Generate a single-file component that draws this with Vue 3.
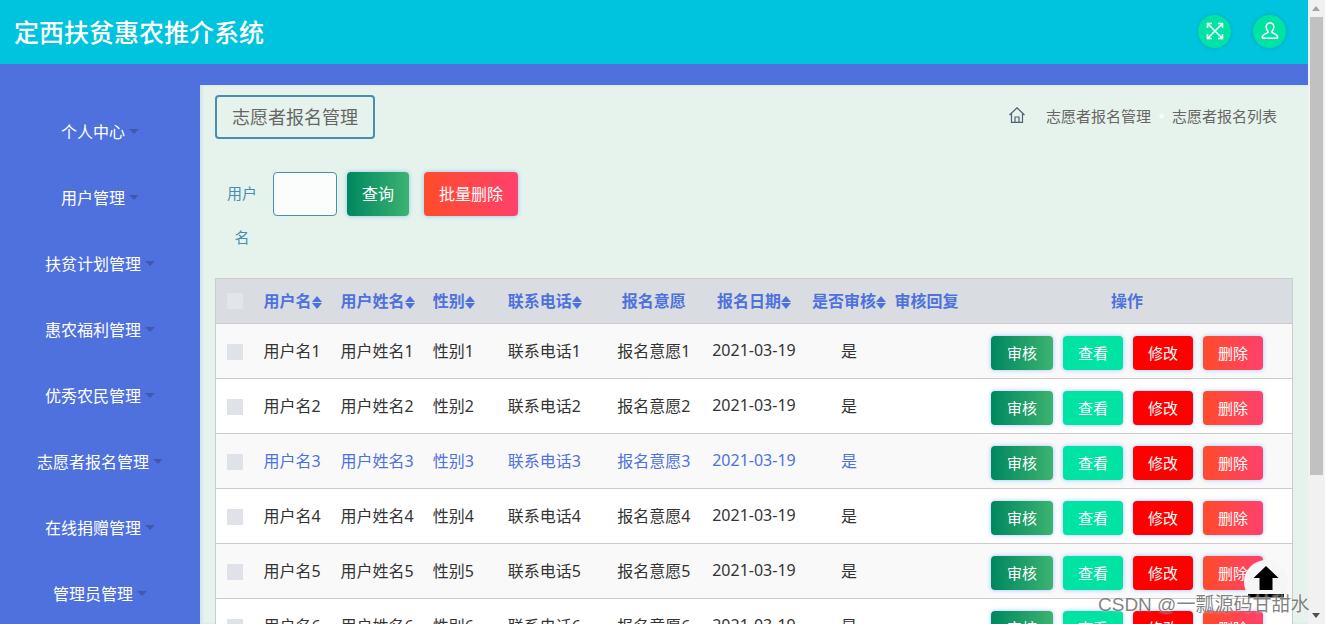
<template>
  <div class="window">
    <div class="page">
      <header class="topbar">
        <h1 class="brand">定西扶贫惠农推介系统</h1>
        <div class="top-actions">
          <button class="round-btn">
            <svg viewBox="0 0 18 18" width="18" height="18" fill="none" stroke="#fff" stroke-width="1.5">
              <path d="M2 2l14 14M16 2L2 16" />
              <path d="M1.5 6V1.5H6M12 1.5h4.5V6M1.5 12v4.5H6M12 16.5h4.5V12" stroke-width="1.6" />
            </svg>
          </button>
          <button class="round-btn">
            <svg viewBox="0 0 20 20" width="20" height="20" fill="none" stroke="#fff" stroke-width="1.5">
              <path d="M10 2c-2.400 0-3.800 1.800-3.800 4 0 2 .8 3.400 1.800 4.300v1.200c-1.800.8-5 1.700-5.700 4.500-.2.800.3 1.300 1 1.300h13.400c.7 0 1.200-.5 1-1.300-.7-2.800-3.900-3.700-5.700-4.500v-1.200c1-.9 1.800-2.300 1.800-4.300 0-2.200-1.400-4-3.800-4z" />
            </svg>
          </button>
        </div>
      </header>

      <div class="body">
        <aside class="sidebar">
          <div v-for="item in menu" :key="item" class="menu-item">
            <span>{{ item }}</span><i class="caret"></i>
          </div>
        </aside>

        <main class="content">
          <div class="title-row">
            <div class="title-box"><span>志愿者报名管理</span></div>
            <div class="crumbs">
              <svg viewBox="0 0 16 16" width="16" height="16" fill="none" stroke="#4f6272" stroke-width="1.200">
                <path d="M.5 8L8 .8 15.500 8M2.500 6.200V15.400h11V6.200M6 15.400V10h4v5.400" />
              </svg>
              <span class="crumb first">志愿者报名管理</span>
              <span class="star">★</span>
              <span class="crumb">志愿者报名列表</span>
            </div>
          </div>

          <div class="search">
            <label class="search-label">用户名</label>
            <input class="search-input" />
            <button class="btn btn-green big">查询</button>
            <button class="btn btn-coral big wide">批量删除</button>
          </div>

          <table class="grid">
            <colgroup>
              <col v-for="w in colWidths" :key="w.key" :style="{ width: w.px + 'px' }" />
            </colgroup>
            <thead>
              <tr>
                <th><span class="check head"></span></th>
                <th v-for="h in heads" :key="h.text" :class="h.cls">
                  {{ h.text }}<span v-if="h.sort" class="sort"><i class="up"></i><i class="down"></i></span>
                </th>
              </tr>
            </thead>
            <tbody>
              <tr v-for="n in 6" :key="n" :class="{ odd: n % 2 === 1, hover: n === 3 }">
                <td><span class="check"></span></td>
                <td>用户名{{ n }}</td>
                <td>用户姓名{{ n }}</td>
                <td>性别{{ n }}</td>
                <td>联系电话{{ n }}</td>
                <td class="center">报名意愿{{ n }}</td>
                <td class="center">2021-03-19</td>
                <td class="center">是</td>
                <td></td>
                <td class="ops">
                  <div class="op-row">
                    <button class="btn btn-green audit">审核</button>
                    <button class="btn btn-mint">查看</button>
                    <button class="btn btn-red">修改</button>
                    <button class="btn btn-coral">删除</button>
                  </div>
                </td>
              </tr>
            </tbody>
          </table>
        </main>
      </div>
    </div>

    <div class="scrollbar">
      <span class="arrow up"></span>
      <span class="thumb"></span>
      <span class="arrow down"></span>
    </div>

    <button class="to-top">
      <svg viewBox="0 0 36 36" width="36" height="36" fill="#000">
        <path d="M18 2L30.500 14H24.500V26H11.500V14H5.500z" />
        <rect y="30" width="36" height="3.500" />
      </svg>
    </button>
    <div class="mark">CSDN @一瓢源码甘甜水</div>
  </div>
</template>

<script setup>
const menu = ['个人中心', '用户管理', '扶贫计划管理', '惠农福利管理', '优秀农民管理', '志愿者报名管理', '在线捐赠管理', '管理员管理']

const colWidths = [
  { key: 'c', px: 36 },
  { key: 'a', px: 77 },
  { key: 'b', px: 92 },
  { key: 'd', px: 75 },
  { key: 'e', px: 111 },
  { key: 'f', px: 94 },
  { key: 'g', px: 106 },
  { key: 'h', px: 84 },
  { key: 'i', px: 71 },
  { key: 'j', px: 330 }
]

const heads = [
  { text: '用户名', sort: true },
  { text: '用户姓名', sort: true },
  { text: '性别', sort: true },
  { text: '联系电话', sort: true },
  { text: '报名意愿', sort: false, cls: 'center' },
  { text: '报名日期', sort: true, cls: 'center' },
  { text: '是否审核', sort: true, cls: 'center' },
  { text: '审核回复', sort: false, cls: 'center' },
  { text: '操作', sort: false, cls: 'center' }
]
</script>

<style>
html,
body {
  margin: 0;
  overflow: hidden;
}
</style>

<style scoped>
.window {
  position: relative;
  display: flex;
  height: 624px;
  overflow: hidden;
  font-family: "Noto Sans", "Noto Sans CJK SC", sans-serif;
}

.page {
  flex: 1;
  min-width: 0;
  display: flex;
  flex-direction: column;
  background: #4f71dd;
}

.topbar {
  flex: none;
  height: 64px;
  background: #00c3dd;
  display: flex;
  align-items: center;
  justify-content: space-between;
  padding: 0 22px 2px 15px;
  box-sizing: border-box;
}

.brand {
  margin: 2px 0 0 -1px;
  color: #fff;
  font-size: 25px;
  font-weight: 500;
  line-height: 32px;
}

.top-actions {
  display: flex;
  gap: 22px;
}

.round-btn {
  width: 33px;
  height: 33px;
  padding: 0;
  border: 0;
  border-radius: 50%;
  background: #00e3a2;
  box-shadow: 0 0 4px rgba(0, 0, 0, 0.15);
  display: flex;
  align-items: center;
  justify-content: center;
}

.body {
  flex: 1;
  display: flex;
  min-height: 0;
}

.sidebar {
  flex: none;
  width: 200px;
  padding-top: 34px;
}

.menu-item {
  height: 66px;
  display: flex;
  align-items: center;
  justify-content: center;
  color: #fff;
  font-size: 16px;
}

.caret {
  width: 0;
  height: 0;
  margin-left: 4px;
  border-top: 5px solid #4258ad;
  border-left: 5px solid transparent;
  border-right: 5px solid transparent;
}

.content {
  flex: 1;
  min-width: 0;
  margin-top: 21px;
  padding: 10px 15px 0;
  background: #e6f3ec;
  box-shadow: inset 2px 0 3px rgba(120, 170, 230, 0.2);
  overflow: hidden;
}

.title-row {
  display: flex;
  align-items: center;
  justify-content: space-between;
}

.title-box {
  width: 160px;
  height: 44px;
  box-sizing: border-box;
  border: 2px solid #4a8eae;
  border-radius: 4px;
  padding-bottom: 3px;
  display: flex;
  align-items: center;
  justify-content: center;
  color: #666;
  font-size: 18px;
}

.crumbs {
  display: flex;
  align-items: center;
  padding: 0 16px 3px 0;
  color: #666;
  font-size: 15px;
  margin-top: -1px;
}

.crumb.first {
  margin-left: 21px;
}

.star {
  margin: 0 7px;
  font-size: 7px;
  color: #fff;
}

.search {
  position: relative;
  display: flex;
  align-items: flex-start;
  margin-top: 33px;
  height: 106px;
}

.search-label {
  width: 54px;
  margin-right: 4px;
  margin-top: -1px;
  box-sizing: border-box;
  padding: 0 12px;
  color: #4a8eae;
  font-size: 15px;
  line-height: 44px;
  text-align: center;
}

.search-input {
  width: 64px;
  height: 44px;
  box-sizing: border-box;
  border: 1px solid #4a8eae;
  border-radius: 4px;
  background: #fbfdfc;
}

.btn {
  border: 0;
  border-radius: 4px;
  color: #fff;
  font-family: inherit;
  font-size: 15px;
  line-height: 32px;
  width: 60px;
  height: 34px;
  padding: 0;
  box-shadow: 0 0 4px rgba(90, 160, 255, 0.6);
}

.btn.big {
  width: 62px;
  height: 44px;
  margin-left: 10px;
  font-size: 16px;
}

.btn.wide {
  width: 94px;
  margin-left: 15px;
}

.btn.audit {
  width: 62px;
}

.btn-green {
  background: linear-gradient(to right, #00875f, #3cb371);
}

.btn-coral {
  background: linear-gradient(to right, #ff4b2b, #ff416c);
}

.btn-mint {
  background: #00e3a2;
}

.btn-red {
  background: #ff0000;
}

.grid {
  width: 1078px;
  table-layout: fixed;
  border-collapse: collapse;
  border: 1px solid #ccc;
  font-size: 16px;
  color: #333;
}

.grid th {
  height: 45px;
  padding: 0 0 2px 12px;
  box-sizing: border-box;
  background: #d9dde2;
  color: #4f71dd;
  font-size: 16px;
  font-weight: 700;
  text-align: left;
  white-space: nowrap;
  border-bottom: 1px solid #ccc;
}

.grid td {
  height: 55px;
  padding: 0 0 2px 12px;
  box-sizing: border-box;
  background: #fff;
  white-space: nowrap;
  border-bottom: 1px solid #ccc;
}

.grid tr.odd td {
  background: #f9f9f9;
}

.grid tr.hover td {
  color: #4f71dd;
}

.grid th.center,
.grid td.center {
  text-align: center;
  padding-left: 0;
}

.check {
  display: block;
  width: 16px;
  height: 16px;
  margin: 4px 0 0 -1px;
  background: #dfe3e9;
}

.check.head {
  background: #e2e5ea;
  margin-top: 2px;
}

.sort {
  display: inline-flex;
  flex-direction: column;
  gap: 1px;
  vertical-align: middle;
}

.sort i {
  width: 0;
  height: 0;
  border-left: 5px solid transparent;
  border-right: 5px solid transparent;
}

.sort .up {
  border-bottom: 6px solid #4f71dd;
}

.sort .down {
  border-top: 6px solid #4f71dd;
}

.grid td.ops {
  padding: 4px 0 0;
}

.op-row {
  display: flex;
  justify-content: center;
  gap: 10px;
}

.scrollbar {
  flex: none;
  width: 17px;
  background: #f1f1f1;
  position: relative;
}

.thumb {
  position: absolute;
  top: 17px;
  left: 2px;
  right: 2px;
  height: 458px;
  background: #c1c1c1;
}

.arrow {
  position: absolute;
  left: 4px;
  width: 0;
  height: 0;
  border-left: 4px solid transparent;
  border-right: 4px solid transparent;
}

.arrow.up {
  top: 6px;
  border-bottom: 5px solid #a3a3a3;
}

.arrow.down {
  bottom: 6px;
  border-top: 5px solid #505050;
}

.to-top {
  position: absolute;
  left: 1244px;
  top: 560px;
  width: 44px;
  height: 44px;
  padding: 0;
  border: 0;
  border-radius: 50%;
  background: #f6f6f6;
  display: flex;
  align-items: center;
  justify-content: center;
}

.mark {
  position: absolute;
  left: 1098px;
  top: 592px;
  font-family: "Liberation Sans", "Noto Sans CJK SC", sans-serif;
  font-size: 19px;
  line-height: 26px;
  white-space: nowrap;
  color: rgba(90, 90, 90, 0.75);
  text-shadow: 0 0 2px rgba(255, 255, 255, 0.8);
}
</style>
